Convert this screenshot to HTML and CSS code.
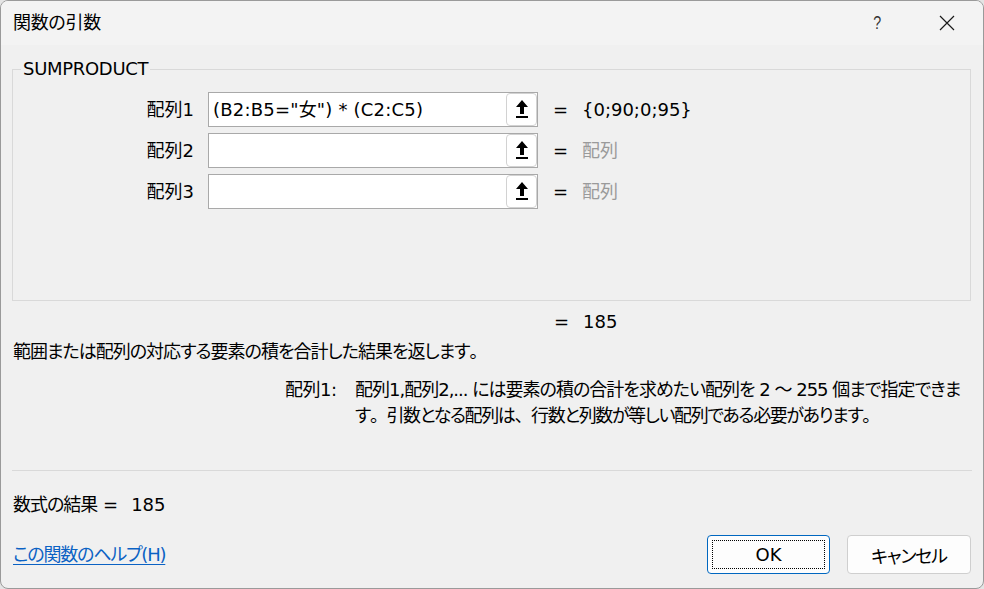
FILE: index.html
```html
<!DOCTYPE html>
<html lang="ja">
<head>
<meta charset="utf-8">
<title>関数の引数</title>
<link rel="stylesheet" href="styles.css">
</head>
<body>
<div class="dialog">
  <div class="titlebar">
    <div class="title">関数の引数</div>
    <div class="controls">
      <span class="help-q">?</span>
      <svg class="close-x" width="16" height="16" viewBox="0 0 16 16"><path d="M1 1 L15 15 M15 1 L1 15" stroke="#1a1a1a" stroke-width="1.2" fill="none"/></svg>
    </div>
  </div>
  <div class="content">
    <fieldset class="group">
      <legend class="legend">SUMPRODUCT</legend>
      <div class="arg-row">
        <div class="arg-label">配列1</div>
        <div class="arg-input">
          <span class="arg-text">(B2:B5="女") * (C2:C5)</span>
          <span class="ref-btn"><svg width="12" height="19" viewBox="0 0 12 19"><path d="M6 0 L12 7 L8 7 L8 14 L4 14 L4 7 L0 7 Z" fill="#000"/><rect x="0" y="16" width="12" height="2" fill="#000"/></svg></span>
        </div>
        <div class="eq">=</div>
        <div class="arg-value">{0;90;0;95}</div>
      </div>
      <div class="arg-row">
        <div class="arg-label">配列2</div>
        <div class="arg-input">
          <span class="arg-text"></span>
          <span class="ref-btn"><svg width="12" height="19" viewBox="0 0 12 19"><path d="M6 0 L12 7 L8 7 L8 14 L4 14 L4 7 L0 7 Z" fill="#000"/><rect x="0" y="16" width="12" height="2" fill="#000"/></svg></span>
        </div>
        <div class="eq">=</div>
        <div class="arg-value muted">配列</div>
      </div>
      <div class="arg-row">
        <div class="arg-label">配列3</div>
        <div class="arg-input">
          <span class="arg-text"></span>
          <span class="ref-btn"><svg width="12" height="19" viewBox="0 0 12 19"><path d="M6 0 L12 7 L8 7 L8 14 L4 14 L4 7 L0 7 Z" fill="#000"/><rect x="0" y="16" width="12" height="2" fill="#000"/></svg></span>
        </div>
        <div class="eq">=</div>
        <div class="arg-value muted">配列</div>
      </div>
    </fieldset>

    <div class="result-row">
      <div class="eq">=</div>
      <div class="arg-value">185</div>
    </div>

    <div class="desc">範囲または配列の対応する要素の積を合計した結果を返します<span class="punct">。</span></div>

    <div class="arg-desc">
      <div class="arg-desc-label">配列1:</div>
      <div class="arg-desc-text">
        <div class="line">配列1,配列2,... には要素の積の合計を求めたい配列を 2 ～ 255 個まで指定できま</div>
        <div class="line line2">す<span class="punct">。</span>引数となる配列は<span class="punct">、</span>行数と列数が等しい配列である必要があります<span class="punct">。</span></div>
      </div>
    </div>

    <div class="separator"></div>

    <div class="formula-result"><span class="jp">数式の結果</span> =<span class="formula-value">185</span></div>

    <div class="footer">
      <a class="help-link" href="#">この関数のヘルプ(H)</a>
      <div class="buttons">
        <button class="btn btn-primary"><span class="btn-label">OK</span></button>
        <button class="btn btn-jp">キャンセル</button>
      </div>
    </div>
  </div>
</div>
</body>
</html>
```

FILE: styles.css
```css
html, body {
  margin: 0;
  padding: 0;
  background: #e4e4e4;
}

.dialog {
  width: 984px;
  height: 589px;
  box-sizing: border-box;
  border: 1px solid #9a9a9a;
  border-radius: 8px;
  overflow: hidden;
  background: #f0f0f0;
  font-family: "DejaVu Sans", "Noto Sans CJK JP", sans-serif;
  font-size: 18px;
  color: #000;
  font-feature-settings: "palt";
}

.titlebar {
  height: 44px;
  background: #f3f3f3;
  display: flex;
  align-items: center;
  padding-left: 12px;
}

.title {
  font-size: 18px;
  line-height: 22px;
  letter-spacing: -0.3px;
}

.controls {
  margin-left: auto;
  display: flex;
  align-items: center;
  margin-right: 28px;
}

.help-q {
  font-family: "Liberation Sans", sans-serif;
  font-size: 19px;
  line-height: 22px;
  color: #333;
  margin-right: 56px;
  display: inline-block;
  transform: scaleX(0.75);
}

.close-x {
  display: block;
}

.content {
  padding: 0 12px 0 11px;
}

.group {
  margin: 13px 0 0 0;
  padding: 12px 0 91px 0;
  border: 1px solid #d9d9d9;
  min-width: 0;
}

.legend {
  margin-left: 8px;
  padding: 0 2px;
  line-height: 22px;
  letter-spacing: -0.3px;
}

.arg-row {
  display: flex;
  align-items: center;
  height: 35px;
  margin-bottom: 6px;
}

.arg-row:last-child {
  margin-bottom: 0;
}

.arg-label {
  width: 181px;
  text-align: right;
  line-height: 22px;
}

.arg-input {
  margin-left: 14px;
  width: 330px;
  height: 35px;
  box-sizing: border-box;
  border: 1px solid #a9a9a9;
  background: #fff;
  display: flex;
  align-items: center;
}

.arg-text {
  padding-left: 4px;
  line-height: 22px;
  white-space: nowrap;
  letter-spacing: 0.2px;
}

.ref-btn {
  margin-left: auto;
  width: 31px;
  height: 33px;
  box-sizing: border-box;
  border: 1px solid #d2d2d2;
  border-radius: 4px;
  background: #fff;
  display: flex;
  align-items: center;
  justify-content: center;
}

.ref-btn svg {
  display: block;
}

.eq {
  margin-left: 15px;
  width: 29px;
  line-height: 22px;
}

.arg-value {
  line-height: 22px;
  white-space: nowrap;
}

.muted {
  color: #9a9a9a;
}

.result-row {
  display: flex;
  align-items: center;
  margin-top: 10px;
  padding-left: 527px;
  height: 22px;
}

.desc {
  margin-top: 8px;
  line-height: 22px;
  padding-left: 1px;
  white-space: nowrap;
  letter-spacing: -1px;
}

.punct {
  font-feature-settings: normal;
}

.arg-desc {
  margin-top: 14px;
  display: flex;
  padding-left: 273px;
  line-height: 26px;
}

.arg-desc-label {
  width: 70px;
  flex: none;
  letter-spacing: -0.5px;
}

.arg-desc-text .line {
  white-space: nowrap;
  letter-spacing: -1px;
}

.arg-desc-text .line2 {
  letter-spacing: -1.4px;
}

.separator {
  margin-top: 41px;
  height: 1px;
  background: #d9d9d9;
  margin-right: -1px;
}

.formula-result {
  margin-top: 23px;
  line-height: 22px;
  padding-left: 1px;
}

.jp {
  letter-spacing: -1px;
}

.formula-value {
  margin-left: 13px;
}

.footer {
  margin-top: 19px;
  display: flex;
  align-items: center;
  justify-content: space-between;
}

.help-link {
  color: #0b62c4;
  text-decoration: underline;
  text-underline-offset: 3px;
  line-height: 22px;
  padding-left: 1px;
  letter-spacing: -1.2px;
}

.buttons {
  display: flex;
  gap: 17px;
}

.btn {
  font-family: "DejaVu Sans", "Noto Sans CJK JP", sans-serif;
  font-size: 18px;
  font-feature-settings: "palt";
  color: #000;
  width: 124px;
  height: 39px;
  box-sizing: border-box;
  border: 1px solid #cfcfcf;
  border-radius: 4px;
  background: #fdfdfd;
  padding: 0;
  position: relative;
}

.btn-jp {
  letter-spacing: -1.2px;
}

.btn-primary {
  width: 123px;
  border-color: #0067c0;
}

.btn-primary::after {
  content: "";
  position: absolute;
  left: 4px;
  right: 4px;
  top: 4px;
  bottom: 4px;
  border: 1px dotted #000;
}
```
